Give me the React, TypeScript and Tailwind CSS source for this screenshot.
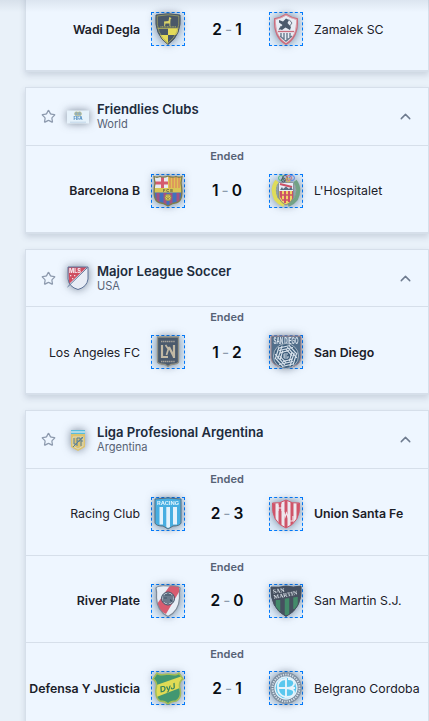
import type { ReactNode } from "react";
import { ChevronUp, Star } from "lucide-react";

const shadow = "drop-shadow-[0_0_4px_rgba(30,45,70,0.55)]";

function Svg({ children }: { children: ReactNode }) {
  return (
    <svg viewBox="0 0 34 34" className={`block size-full ${shadow}`} fontFamily="Inter, sans-serif" fontWeight="700">
      {children}
    </svg>
  );
}

const WadiDegla = () => (
  <Svg>
    <clipPath id="wd"><path d="M5 3Q17 .5 29 3Q31 23 17 32.500Q3 23 5 3Z" /></clipPath>
    <g clipPath="url(#wd)">
      <path fill="#4a5868" d="M0 0H34V34H0Z" />
      <path fill="#e5db59" d="M17 16.500H27V23H17ZM8 23H17V33H8Z" />
      <path stroke="#e5db59" strokeWidth=".7" d="M6 16.300H28" />
    </g>
    <path fill="none" stroke="#4a5868" strokeWidth="1" d="M5 3Q17 .5 29 3Q31 23 17 32.500Q3 23 5 3Z" />
    <path fill="none" stroke="#aeae61" strokeWidth=".7" d="M6.200 4Q17 1.600 27.800 4Q29.300 22 17 31Q4.700 22 6.200 4Z" />
    <path fill="#d9d268" d="M13 9.500L17.500 9L18.200 5L20.500 6L19.500 7.500L19.300 11V14H18.500V11.500L14.500 11.500L14 14H13.200L13.200 11.200Z" />
    <path stroke="#b5b563" strokeWidth="1" strokeDasharray="1 .6" d="M9.500 14.800H25" />
  </Svg>
);

const Zamalek = () => (
  <Svg>
    <path fill="#e8edf5" stroke="#c96d7d" strokeWidth="2" d="M17 2.500Q12 6 6 7Q5 25 17 32Q29 25 28 7Q22 6 17 2.500Z" />
    <path fill="none" stroke="#f2dce2" strokeWidth=".5" d="M17 3Q12 6.500 6.500 7.500Q5.500 24 17 31Q28.500 24 27.500 7.500Q22.500 6.500 17 3Z" />
    <path fill="#4b5a6c" d="M10 8L14 9.500L17 6.500L20 8L18.500 11L22 15L21 18L16.500 15.500L13 18L10 17L13.500 13L10 10.500Z" />
    <path stroke="#4b5a6c" strokeWidth=".8" d="M20 7.500L23 11L20 15M12 14L10 18" fill="none" />
    <path stroke="#c96d7d" strokeWidth="1.300" d="M9 19.500H25" />
    <path stroke="#68798d" strokeWidth="1.400" d="M12 21V25M15 21V28M18 21V29M21 21V26M11 24L17 29L23 24" fill="none" />
  </Svg>
);

const BARCA = "M3 2.500Q6 4 9 2.500Q13 4 17 2Q21 4 25 2.500Q28 4 31 2.500L30 9Q33 26 26 28.500Q21 29 17 32Q13 29 8 28.500Q1 26 4 9Z";

const Barcelona = () => (
  <Svg>
    <clipPath id="fcb"><path d={BARCA} /></clipPath>
    <g clipPath="url(#fcb)">
      <path fill="#e7eaf0" d="M0 0H17V15H0Z" />
      <path fill="#d55a6e" d="M10 2H13V15H10ZM4 7.500H17V10.500H4Z" />
      <path fill="#dfc454" d="M17 0H34V15H17Z" />
      <path stroke="#dc8560" strokeWidth="1.300" d="M19 3V14M22 3V14M25 3V14M28 3V14" />
      <path fill="#4271bb" d="M0 18H34V34H0Z" />
      <path stroke="#a45280" strokeWidth="3" d="M7 19V30M14 19V32M20 19V32M27 19V30" />
      <path fill="#d9c654" d="M0 14H34V18.500H0Z" />
    </g>
    <path fill="none" stroke="#807c4b" strokeWidth="1.300" d={BARCA} />
    <circle cx="17" cy="23.500" r="3" fill="#ded058" stroke="#a1984b" />
    <path stroke="#877f4b" strokeWidth=".7" d="M14.500 22.500L17 25L19.500 22.500M17 21V26" fill="none" />
    <text x="17.500" y="17.800" fontSize="4" letterSpacing="1" textAnchor="middle" fill="#575d4b">FCB</text>
  </Svg>
);

const Hospitalet = () => (
  <Svg>
    <path fill="none" stroke="#dfdc59" strokeWidth="4" d="M8 7Q2 15 7 25Q10 29 15 31" />
    <path fill="none" stroke="#72a285" strokeWidth="4" d="M26 7Q32 15 27 25Q24 29 19 31" />
    <path fill="none" stroke="#8ba384" strokeWidth="1" strokeDasharray="2 1" d="M9 10Q6 15 9 24M25 10Q29 15 25 24" />
    <path fill="#f1d567" stroke="#7d7c79" strokeWidth=".8" d="M10 9H24V24Q22 29 17 31Q12 29 10 24Z" />
    <path fill="#cc5266" d="M11 17H13V26L11 23ZM15 17H17V29H15ZM19 17H21V28H19ZM23 17H24V24L23 26Z" />
    <path stroke="#cc5266" strokeWidth="1.500" d="M11 21H23M13 26H21" />
    <path fill="#e6edf6" d="M10 9H24V17H10Z" />
    <path stroke="#cc5266" strokeWidth="2" d="M11 10L23 13" />
    <path fill="#576d82" d="M11 16L13 13L14 15L17 12.500L20 15L22 13L24 16Z" />
    <g fill="none" strokeWidth=".9"><circle cx="12" cy="4" r="2.500" stroke="#48bd77" /><circle cx="16" cy="4" r="2.500" stroke="#4a5261" /><circle cx="20" cy="4" r="2.500" stroke="#dc6578" /><circle cx="23" cy="4" r="2.500" stroke="#5580e6" /><circle cx="14.500" cy="6" r="2" stroke="#4a5261" /><circle cx="19" cy="6" r="2" stroke="#dfbd4a" /></g>
  </Svg>
);

const Lafc = () => (
  <Svg>
    <path fill="#4b5a6c" stroke="#919185" strokeWidth="1.300" d="M6.500 2H27.500V27Q27 29 20 29.500L17 31.500L14 29.500Q7 29 6.500 27Z" />
    <path fill="none" stroke="#c2b9a4" strokeWidth="2.200" d="M11 10V22H17M18 12L23 22M23 10V23" />
    <path stroke="#c2b9a4" strokeWidth="1.700" d="M14.500 10L18 15M18 12L15.500 20" />
    <path stroke="#a5a198" strokeWidth="1.300" strokeDasharray="1.400 .5" d="M10 6.500H24M10 26.500H24" />
  </Svg>
);

const SanDiego = () => (
  <Svg>
    <path fill="#526f8b" stroke="#ad8b91" strokeWidth="1" d="M2 1H32V23Q31 32 17 33Q3 32 2 23Z" />
    <text x="17" y="8.500" fontSize="9" textLength="25" lengthAdjust="spacingAndGlyphs" textAnchor="middle" fill="#dce5ee">SAN DIEGO</text>
    <circle cx="17" cy="21" r="12.500" fill="#3f5f7c" stroke="#a7b5c3" />
    <g fill="none" stroke="#d8e2ec" strokeWidth="1.200">
      {[0, 60, 120, 180, 240, 300].map((a) => (
        <g key={a} transform={`rotate(${a} 17 21)`}><path d="M10 13L21 10.500M10 15.500L24 12.500M11 17.800L20 15.500" /></g>
      ))}
    </g>
    <circle cx="17" cy="21" r="3.800" fill="#3f5f7c" />
    <path stroke="#d8e2ec" strokeWidth=".9" fill="none" d="M15 19H19M15 21H18M15 23H19M15 19V23M19 21V23" />
  </Svg>
);

const Racing = () => (
  <Svg>
    <path fill="#48aee1" stroke="#547184" strokeWidth="1" d="M4 2Q17 0 30 2V26Q29 29 22 29L17 32L12 29Q5 29 4 26Z" />
    <text x="17" y="7.500" fontSize="4.500" textLength="22" lengthAdjust="spacingAndGlyphs" textAnchor="middle" fill="#dcf2fd">RACING</text>
    <path fill="#e5f2fc" d="M8.500 10H12V27.500H8.500ZM15.300 10H19V30L17 31L15.300 30ZM22 10H26V27.500H22Z" />
  </Svg>
);

const UNION = "M3.500 6Q11 7 17 3Q23 7 30.500 6Q32 25 17 31Q2 25 3.500 6Z";

const Union = () => (
  <Svg>
    <clipPath id="un"><path d={UNION} /></clipPath>
    <g clipPath="url(#un)">
      <path fill="#ece9ef" d="M0 0H34V34H0Z" />
      <path stroke="#cf5469" strokeWidth="3" d="M5 3V30M11 3V30M17 3V32M23 3V30M29 3V30" />
    </g>
    <path fill="none" stroke="#cf5469" strokeWidth="1" d={UNION} />
    <path fill="none" stroke="#f2e5eb" strokeWidth="1.200" d="M9 8V14M13 7V14M9 11H13M15 15L16 20L17.500 16L19 20L20 15M21 24H24V19" />
  </Svg>
);

const RIVER = "M5 4Q7 1 17 2Q27 1 29 4Q28 8 28.500 14Q28 27 17 32.500Q6 27 5.500 14Q6 8 5 4Z";

const River = () => (
  <Svg>
    <clipPath id="rv"><path d={RIVER} /></clipPath>
    <g clipPath="url(#rv)"><path fill="#e8eef6" d="M0 0H34V34H0Z" /><path fill="#d75c70" d="M20 0H28V8L15 30L9 27L6 20Z" /></g>
    <path fill="none" stroke="#7d8997" strokeWidth="1.200" d={RIVER} />
    <circle cx="17" cy="14.500" r="6.500" fill="#aab7c4" stroke="#425468" strokeWidth="1" />
    <path fill="none" stroke="#425468" strokeWidth="1.200" d="M13 11V18M15 10V19M13 14H16M17 9V20M19 10V19M21 11V18M19 15L21 18M14 11L20 11" />
  </Svg>
);

const MARTIN = "M2 3Q10 4 17 2Q24 4 32 2Q34 24 17 32.500Q1 24 2 3Z";

const SanMartin = () => (
  <Svg>
    <clipPath id="sm"><path d={MARTIN} /></clipPath>
    <g clipPath="url(#sm)"><path fill="#46505f" d="M0 0H34V34H0Z" /><path stroke="#438b6a" strokeWidth="4.500" d="M9 16V27M18 13V31M26.500 12V25" /><path fill="#46505f" d="M0 0H34V12L0 17Z" /></g>
    <path fill="none" stroke="#46505f" strokeWidth="1" d={MARTIN} />
    <g fill="#d8dfe6" fontFamily="Liberation Serif, serif"><text x="4" y="9.500" fontSize="6" transform="rotate(-8 4 9.500)">SAN</text><text x="5" y="15" fontSize="5.700" textLength="24" lengthAdjust="spacingAndGlyphs" transform="rotate(-11 5 15)">MARTIN</text></g>
  </Svg>
);

const DEFENSA = "M6 2Q8 5 17 3Q26 5 28 2L32 8Q27 11 29 18Q31 27 25 30Q20 30 17 33Q14 30 9 30Q4 27 5 18Q7 11 2 8Z";

const Defensa = () => (
  <Svg>
    <clipPath id="dj"><path d={DEFENSA} /></clipPath>
    <g clipPath="url(#dj)"><path fill="#429771" d="M0 0H34V34H0Z" /><path fill="#e0db55" d="M0 16L34 4V15L3 27Z" /></g>
    <path fill="none" stroke="#a5bd56" strokeWidth="1.500" d={DEFENSA} />
    <text x="9.500" y="21.500" fontSize="8" fontStyle="italic" textLength="16" lengthAdjust="spacingAndGlyphs" fill="#36835d" transform="rotate(-14 9.500 21.500)">DyJ</text>
  </Svg>
);

const Belgrano = () => (
  <Svg>
    <circle cx="17" cy="17" r="15.500" fill="#778b9e" stroke="#8696a6" strokeWidth=".8" />
    <circle cx="17" cy="17" r="13.500" fill="none" stroke="#d6dfe8" strokeWidth="2" strokeDasharray="1.300 1.100" />
    <circle cx="17" cy="17" r="11" fill="#59c7ee" stroke="#e0f2fc" strokeWidth="1.300" />
    <path fill="none" stroke="#e5f3fb" strokeWidth="1.900" d="M16 8Q8 9 9 17Q9 24 16 26M17 7V27M9 17H26M19 8Q26 8 25 13Q24 17 18 17Q26 18 25 22Q24 26 18 26" />
  </Svg>
);

const Fifa = () => (
  <svg viewBox="0 0 26 26" className={`size-[26px] ${shadow}`} fontFamily="Inter, sans-serif">
    <path fill="#e6f2fb" d="M2 6.500H24V19.500H2Z" />
    <g fill="#8faebe" stroke="#c3bd7d" strokeWidth=".6"><circle cx="11.500" cy="9.800" r="2" /><circle cx="14.500" cy="9.800" r="2" /></g>
    <text x="13" y="16.400" fontSize="4.300" fontWeight="800" textAnchor="middle" fill="#518ec0">FIFA</text>
    <path stroke="#a9c5db" strokeWidth=".6" d="M5 18.200H21" />
  </svg>
);

const Mls = () => (
  <svg viewBox="0 0 26 26" className={`size-[26px] ${shadow}`} fontFamily="Inter, sans-serif">
    <path fill="#e8edf6" d="M3 2H23V14Q22 22 13 24.500Q4 22 3 14Z" />
    <path fill="#cf4f62" d="M3 2H22L4 19Z" />
    <path fill="none" stroke="#5f7398" strokeWidth="1" d="M3 2H23V14Q22 22 13 24.500Q4 22 3 14ZM2.500 22L22.500 2.500" />
    <text x="10" y="8" fontSize="5.500" fontWeight="800" textAnchor="middle" fill="#f4e8ee">MLS</text>
    <path fill="#f4dce2" d="M5 10H6.300V11.300H5ZM9 10H10.300V11.300H9ZM7 13H8.300V14.300H7Z" />
  </svg>
);

const Lpf = () => (
  <svg viewBox="0 0 26 26" className={`size-[26px] ${shadow}`}>
    <path fill="#ddc36f" d="M6 3H20V20L13 24L6 20Z" />
    <path fill="#59bddc" d="M6 3H20V7H6Z" />
    <path stroke="#e5eef2" strokeWidth="1.200" d="M6 5H20" />
    <path fill="none" stroke="#d8d8c2" strokeWidth="1" d="M8 10H18V19L13 22L8 19Z" />
    <path fill="none" stroke="#567f9c" strokeWidth="1" d="M9 11V17H12M12 19V11H15V14H12M16 19V11H18M8 20L18 10M16 14H18" />
  </svg>
);

type Game = {
  home: string;
  away: string;
  score: [number, number];
  left: ReactNode;
  right: ReactNode;
  raised?: boolean;
  lowStatus?: boolean;
};

const Crest = ({ children }: { children: ReactNode }) => (
  <div className="size-[34px] shrink-0 bg-[#dcebf9] outline-1 -outline-offset-1 outline-dashed outline-[#007bff]">{children}</div>
);

function Match({ home, away, score, left, right, raised, lowStatus }: Game) {
  const [h, a] = score;
  const lift = raised ? "pb-px" : "pt-px";
  return (
    <div className="h-[87px] border-b border-[#d6dfea] last:h-[86px] last:border-b-0">
      <div className={`h-7 text-center text-[11px] leading-4 font-semibold text-[#566275] ${lowStatus ? "pt-[3px]" : "pt-[2px]"}`}>Ended</div>
      <div className="flex h-[34px] items-center text-[12.3px] leading-5 whitespace-nowrap text-[#1b2028]">
        <div className={`flex flex-1 basis-0 justify-end pr-[11px] ${lift} ${h > a ? "font-semibold" : ""}`}>{home}</div>
        <Crest>{left}</Crest>
        <div className={`flex w-[84px] shrink-0 items-center justify-center gap-[3px] text-[15.5px] font-semibold text-[#080d14] ${raised ? "" : "pt-[2px]"}`}>
          <span>{h}</span>
          <span className="font-normal text-[#8c9bad]">-</span>
          <span>{a}</span>
        </div>
        <Crest>{right}</Crest>
        <div className={`flex flex-1 basis-0 pl-[11px] ${lift} ${a > h ? "font-semibold" : ""}`}>{away}</div>
      </div>
    </div>
  );
}

const cardClass = "mb-[15px] border border-b-2 border-[#d6dfea] bg-[#eef6ff] shadow-[0_3px_6px_rgba(60,80,110,0.18)]";

function League({ name, country, logo, short, games }: { name: string; country: string; logo: ReactNode; short?: boolean; games: Game[] }) {
  return (
    <section className={cardClass}>
      <header className={`flex items-center border-b border-[#d6dfea] pr-[14px] pl-[15px] ${short ? "h-[57px]" : "h-[58px]"}`}>
        <Star className="size-[15px] shrink-0 text-[#8d9aae]" strokeWidth={2} />
        <div className="ml-[9px] size-[26px]">{logo}</div>
        <div className="ml-[6px] flex-1 pb-px">
          <h2 className="text-[13.1px] leading-4 font-semibold text-[#202b3c]">{name}</h2>
          <p className="text-[11.1px] leading-[14px] text-[#566275]">{country}</p>
        </div>
        <ChevronUp className="size-[17px] text-[#6e7b8f]" strokeWidth={2} />
      </header>
      {games.map((g) => <Match key={g.home} {...g} />)}
    </section>
  );
}

export default function App() {
  return (
    <main className="relative h-[721px] w-[429px] overflow-hidden bg-[#e9f1f9] pl-[25px] font-['Inter',sans-serif]">
      <section className={`-mt-4 ${cardClass} border-t-0`}>
        <Match home="Wadi Degla" away="Zamalek SC" score={[2, 1]} left={<WadiDegla />} right={<Zamalek />} />
      </section>
      <League name="Friendlies Clubs" country="World" logo={<Fifa />} games={[
        { home: "Barcelona B", away: "L'Hospitalet", score: [1, 0], left: <Barcelona />, right: <Hospitalet />, raised: true },
      ]} />
      <League name="Major League Soccer" country="USA" logo={<Mls />} short games={[
        { home: "Los Angeles FC", away: "San Diego", score: [1, 2], left: <Lafc />, right: <SanDiego /> },
      ]} />
      <League name="Liga Profesional Argentina" country="Argentina" logo={<Lpf />} games={[
        { home: "Racing Club", away: "Union Santa Fe", score: [2, 3], left: <Racing />, right: <Union />, raised: true },
        { home: "River Plate", away: "San Martin S.J.", score: [2, 0], left: <River />, right: <SanMartin />, raised: true, lowStatus: true },
        { home: "Defensa Y Justicia", away: "Belgrano Cordoba", score: [2, 1], left: <Defensa />, right: <Belgrano />, lowStatus: true },
      ]} />
      <div className="absolute inset-x-0 top-0 h-3 bg-gradient-to-b from-[#8190a52b] to-transparent" />
    </main>
  );
}
